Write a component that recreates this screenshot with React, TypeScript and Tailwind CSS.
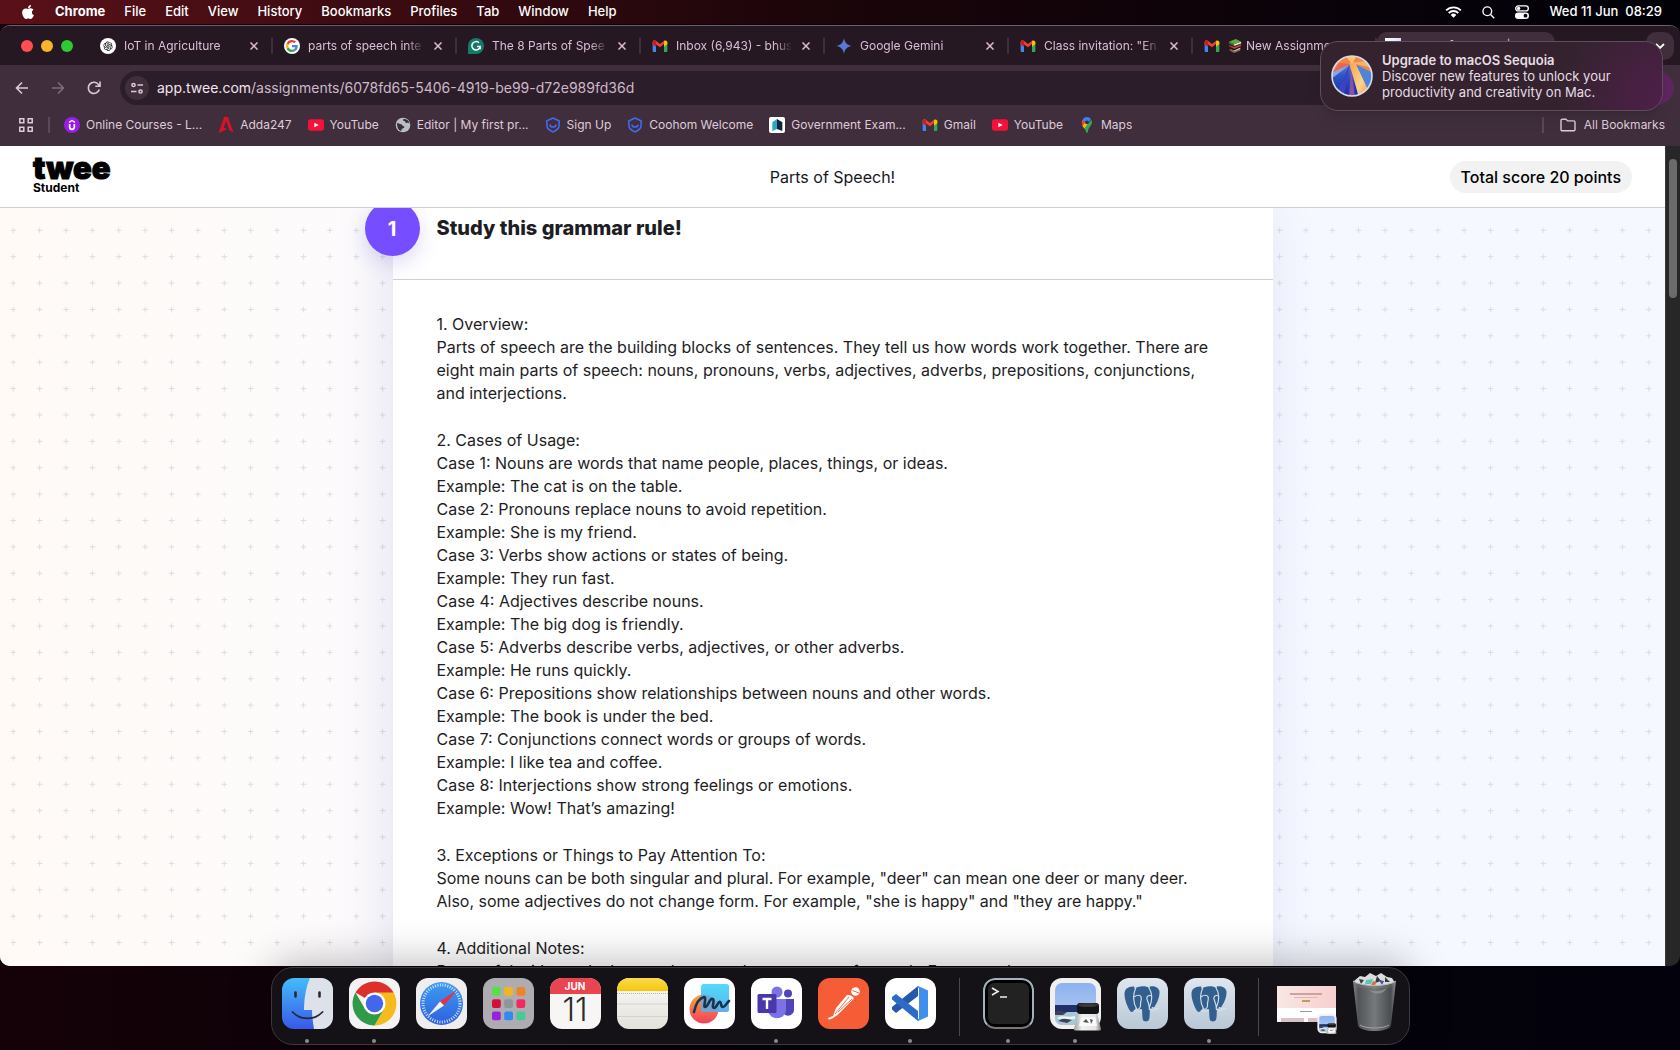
import React from "react";
import { FaApple } from "react-icons/fa";
import { AiOutlineOpenAI } from "react-icons/ai";

/* ---------- small brand icons ---------- */

const GmailIcon = () => (
  <svg viewBox="0 0 24 24" className="size-4 shrink-0" aria-hidden="true">
    <path d="M1 20V6l5 4v11H2.500C1.600 21 1 20.500 1 20Z" fill="#4285f4" />
    <path d="M23 20V6l-5 4v11h3.500c.9 0 1.500-.5 1.500-1Z" fill="#34a853" />
    <path d="M1 6.500C1 3.500 3.800 2.800 5.700 4.200L12 9l6.300-4.800 1.700 3L12 14 6 9.800v3.500L1 9.500Z" fill="#ea4335" />
    <path d="M18 9.500V4.400C20.200 2.800 23 3.900 23 6.500v2.800L18 13Z" fill="#fbbc04" />
    <path d="M6 9.800V4.400L1.600 4.100C1 5 1 5.700 1 6.500v2.800L6 13Z" fill="#c5221f" />
  </svg>
);

const GoogleIcon = () => (
  <svg viewBox="0 0 24 24" className="size-4 shrink-0" aria-hidden="true">
    <circle cx="12" cy="12" r="12" fill="#fff" />
    <path d="M20.600 12.200c0-.6-.1-1.200-.2-1.700H12v3.400h4.900a4.200 4.200 0 0 1-1.800 2.700l2.900 2.300c1.700-1.600 2.600-3.900 2.600-6.700Z" fill="#4285f4" />
    <path d="M12 21c2.400 0 4.500-.8 6-2.100l-2.900-2.300c-.8.5-1.800.9-3.100.9-2.400 0-4.400-1.600-5.100-3.800l-3 2.300A9 9 0 0 0 12 21Z" fill="#34a853" />
    <path d="M6.900 13.700a5.400 5.400 0 0 1 0-3.400l-3-2.300a9 9 0 0 0 0 8Z" fill="#fbbc05" />
    <path d="M12 6.500c1.400 0 2.600.5 3.500 1.400l2.600-2.600A9 9 0 0 0 3.900 8l3 2.300C7.600 8.100 9.600 6.500 12 6.500Z" fill="#ea4335" />
  </svg>
);

const ChatIcon = () => (
  <span className="flex size-4 shrink-0 items-center justify-center rounded-full bg-white text-[#222]">
    <AiOutlineOpenAI className="size-3" />
  </span>
);

const GrammarlyIcon = () => (
  <svg viewBox="0 0 24 24" className="size-4 shrink-0" aria-hidden="true">
    <path d="M0 24V12A12 12 0 1 1 12 24Z" fill="#15796a" />
    <path d="M16.500 7.200A6.300 6.300 0 1 0 18.300 12.800H13.500M18.300 12.800v4.200" fill="none" stroke="#fff" strokeWidth="2.200" />
  </svg>
);

const GeminiIcon = () => (
  <svg viewBox="0 0 24 24" className="size-4 shrink-0" aria-hidden="true">
    <defs>
      <linearGradient id="gem" x1="0" y1="1" x2="1" y2="0">
        <stop offset="0" stopColor="#2f86d8" />
        <stop offset=".5" stopColor="#5b78d8" />
        <stop offset="1" stopColor="#7d6ac8" />
      </linearGradient>
    </defs>
    <path d="M12 0c1 7 5 11 12 12-7 1-11 5-12 12-1-7-5-11-12-12C7 11 11 7 12 0Z" fill="url(#gem)" />
  </svg>
);

const BooksIcon = () => (
  <svg viewBox="0 0 16 16" className="size-3.5 shrink-0" aria-hidden="true">
    <path d="m1 3 8-3 6 3-8 3Z" fill="#5aa944" />
    <path d="m1 3 6 3v2L1 5Z" fill="#3c7d2c" />
    <path d="m7 6 8-3v2L7 8Z" fill="#e8e2d8" />
    <path d="m1 7 6 2 8-3v2l-8 3-6-3Z" fill="#c9463c" />
    <path d="m2 11 5 2 7-3v3l-7 3-5-3Z" fill="#8d6a52" />
    <path d="m7 13 7-3v1l-7 3Z" fill="#ded6cb" />
  </svg>
);

const UdemyIcon = () => (
  <svg viewBox="0 0 24 24" className="size-4 shrink-0" aria-hidden="true">
    <circle cx="12" cy="12" r="12" fill="#9a1bea" />
    <path d="m7.500 8 4.500-2.800L16.500 8" fill="none" stroke="#fff" strokeWidth="2" />
    <path d="M8.500 10.500v4.500a3.500 3.500 0 0 0 7 0v-4.500" fill="none" stroke="#fff" strokeWidth="2.600" />
  </svg>
);

const AddaIcon = () => (
  <svg viewBox="0 0 24 24" className="size-4 shrink-0" aria-hidden="true">
    <path d="M9 0h6l8 23-6-3-2-6-3-8-3.500 10L14 18 1 24Z" fill="#d9122b" />
  </svg>
);

const YouTubeIcon = () => (
  <svg viewBox="0 0 24 24" className="size-4 shrink-0" aria-hidden="true">
    <rect y="3.500" width="24" height="17" rx="4" fill="#f6103a" />
    <path d="m9.500 8.500 6.500 3.500-6.500 3.500Z" fill="#fff" />
  </svg>
);

const GlobeIcon = () => (
  <svg viewBox="0 0 24 24" className="size-4 shrink-0" aria-hidden="true">
    <circle cx="12" cy="12" r="11" fill="#b9bdc6" />
    <path d="M3 9c3 0 4 2 6 2s2 3 4 3 1 3-1 3-2 4-3 4C5 20 3 16 3 9ZM13 3c-2 1-1 3 1 3s1 3 3 3 3-1 5 1c-1-4-4-7-9-7Z" fill="#3d2d3a" />
  </svg>
);

const HexIcon = () => (
  <svg viewBox="0 0 24 24" className="size-4 shrink-0" aria-hidden="true">
    <path d="m12 1.500 9.500 4.500-.8 9.500C19.500 18.500 15.500 20.500 12 22.500 8.500 20.500 4.500 18.500 3.300 15.500L2.500 6Z" fill="none" stroke="#4068f0" strokeWidth="2.400" strokeLinejoin="round" />
    <path d="M7.500 12c1 4 8 4 9 0" fill="none" stroke="#4068f0" strokeWidth="2.400" strokeLinecap="round" />
  </svg>
);

const GovIcon = () => (
  <svg viewBox="0 0 24 24" className="size-4 shrink-0" aria-hidden="true">
    <rect width="24" height="24" rx="3" fill="#fff" />
    <path d="M12 3v15l-7 3V8Z" fill="#27a9c4" />
    <path d="M12 3v15l8 3V8Z" fill="#13253a" />
  </svg>
);

const MapsIcon = () => (
  <svg viewBox="0 0 24 24" className="size-4 shrink-0" aria-hidden="true">
    <path d="M12 0c2 0 4.500 1 6 3.200L9.500 13 4.500 6C5.500 2.500 8.500 0 12 0Z" fill="#3f7df0" />
    <path d="M4.800 4.500 9 8l-3.500 6C4 11 3.500 8 4.800 4.500Z" fill="#ea4335" />
    <path d="m9 8.500-3.800 5 3 4L15 9.500Z" fill="#fbbc04" />
    <path d="M18.500 4c3 6-2 9.500-4 13.500-1 2-1 6.500-2.500 6.500s-1.500-4-4-7Z" fill="#34a853" />
    <circle cx="12" cy="8" r="2.800" fill="#3d2d3a" />
  </svg>
);

const XIcon = () => (
  <svg viewBox="0 0 8 8" className="size-2" fill="none" stroke="currentColor" strokeWidth="1.500" aria-hidden="true">
    <path d="m.5.5 7 7M7.500.5l-7 7" />
  </svg>
);

/* ---------- menu bar ---------- */

const menus = ["File", "Edit", "View", "History", "Bookmarks", "Profiles", "Tab", "Window", "Help"];

function MenuBar() {
  return (
    <header className="flex h-6 shrink-0 items-center justify-between bg-linear-to-r from-[#5a1018] via-[#1a0509] to-[#020108] pr-[18px] pl-5 text-[13px] font-medium text-white">
      <nav className="flex items-center gap-[19px]">
        <button aria-label="Apple menu"><FaApple className="size-4" /></button>
        <button className="font-bold">Chrome</button>
        {menus.map((m) => <button key={m}>{m}</button>)}
      </nav>
      <div className="flex items-center gap-5">
        <svg viewBox="0 0 18 13" className="h-3 w-[17px]" aria-hidden="true">
          <path d="M1 4.800a11.300 11.300 0 0 1 16 0M3.800 7.600a7.400 7.400 0 0 1 10.400 0" fill="none" stroke="#fff" strokeWidth="2" />
          <path d="M6 9.700a4.300 4.300 0 0 1 6 0l-3 3Z" fill="#fff" />
        </svg>
        <svg viewBox="0 0 14 14" className="size-[13px]" fill="none" stroke="#fff" strokeWidth="1.500" aria-hidden="true">
          <circle cx="5.700" cy="5.700" r="4.700" /><path d="m9.200 9.200 4 4" />
        </svg>
        <svg viewBox="0 0 14 14" className="size-3.5" aria-hidden="true">
          <rect x=".7" y=".9" width="12.600" height="5" rx="2.500" fill="none" stroke="#fff" strokeWidth="1.300" />
          <circle cx="3.600" cy="3.400" r="1.700" fill="#fff" />
          <rect y="7.500" width="14" height="6.400" rx="3.200" fill="#fff" />
          <circle cx="10.500" cy="10.700" r="1.900" fill="#0a0408" />
        </svg>
        <time className="whitespace-pre">Wed 11 Jun  08:29</time>
      </div>
    </header>
  );
}

/* ---------- browser chrome ---------- */

type TabInfo = { title: string; icon: React.ReactNode; extra?: React.ReactNode };

const tabs: TabInfo[] = [
  { title: "IoT in Agriculture", icon: <ChatIcon /> },
  { title: "parts of speech inte", icon: <GoogleIcon /> },
  { title: "The 8 Parts of Spee", icon: <GrammarlyIcon /> },
  { title: "Inbox (6,943) - bhus", icon: <GmailIcon /> },
  { title: "Google Gemini", icon: <GeminiIcon /> },
  { title: "Class invitation: \"En", icon: <GmailIcon /> },
  { title: "New Assignme", icon: <GmailIcon />, extra: <BooksIcon /> },
];

function TabStrip() {
  return (
    <div className="flex h-[39px] shrink-0 items-center bg-[#261823] pr-1.5 pl-[21px] text-xs text-[#dcbdd6]">
      <div className="flex w-[68px] shrink-0 gap-2">
        <button aria-label="Close window" className="size-3 rounded-full bg-[#ff4f55]" />
        <button aria-label="Minimise window" className="size-3 rounded-full bg-[#f9b42a]" />
        <button aria-label="Zoom window" className="size-3 rounded-full bg-[#2fc933]" />
      </div>
      <div role="tablist" aria-label="Tabs" className="flex min-w-0">
        {tabs.map((t) => (
          <div key={t.title} className="flex h-4 w-[184px] items-center border-r-2 border-[#402e3c] pr-[11px] pl-[11px]">
            <button role="tab" aria-selected="false" className="flex min-w-0 flex-1 items-center gap-2">
              {t.icon}
              {t.extra && <span className="-mr-1">{t.extra}</span>}
              <span className="min-w-0 flex-1 overflow-hidden mask-r-from-85% mask-r-to-100% text-left whitespace-nowrap">{t.title}</span>
            </button>
            <button aria-label={`Close ${t.title}`} className="ml-2 p-0.5"><XIcon /></button>
          </div>
        ))}
        <button role="tab" aria-selected="true" className="-my-1.5 flex h-7 w-[178px] items-center gap-2 rounded-[10px] bg-[#402e3c] px-2">
          <span className="size-4 bg-linear-to-br from-white to-[#b9c9ee] text-[11px] leading-4 font-black text-black">t</span>
          <span>Parts of Speech! | Twee</span>
        </button>
      </div>
      <button aria-label="New tab" className="ml-3.5 text-lg">+</button>
      <button aria-label="Search tabs" className="ml-auto flex size-7 items-center justify-center rounded-[10px] bg-[#402e3c] text-white">
        <svg viewBox="0 0 10 6" className="h-1.5 w-2.5" fill="none" stroke="currentColor" strokeWidth="1.800" aria-hidden="true"><path d="m1 1 4 4 4-4" /></svg>
      </button>
    </div>
  );
}

function Toolbar() {
  return (
    <div className="flex h-[41px] shrink-0 items-center bg-[#402e3c] px-1.5 pt-[5px] text-[#e0c8da]">
      <div className="flex w-[114px] items-center gap-5 pl-2">
        <button aria-label="Back">
          <svg viewBox="0 0 16 16" className="size-4" fill="none" stroke="currentColor" strokeWidth="1.600" aria-hidden="true"><path d="M14 8H2.500M8 2.500 2.500 8 8 13.500" /></svg>
        </button>
        <button aria-label="Forward" className="text-[#806d7b]">
          <svg viewBox="0 0 16 16" className="size-4" fill="none" stroke="currentColor" strokeWidth="1.600" aria-hidden="true"><path d="M2 8h11.500M8 2.500 13.500 8 8 13.500" /></svg>
        </button>
        <button aria-label="Reload">
          <svg viewBox="0 0 16 16" className="size-4" fill="none" stroke="currentColor" strokeWidth="1.600" aria-hidden="true"><path d="M13.300 9.500A5.600 5.600 0 1 1 12.500 4.600L14 6.200M14 1.500v4.700H9.300" /></svg>
        </button>
      </div>
      <div className="flex h-[34px] min-w-0 flex-1 items-center gap-2 rounded-full bg-[#2c1d2a] pl-[5px]">
        <button aria-label="View site information" className="flex size-6 items-center justify-center rounded-full bg-[#402e3c]">
          <svg viewBox="0 0 14 14" className="size-3.5" fill="none" stroke="currentColor" strokeWidth="1.500" aria-hidden="true">
            <circle cx="3.500" cy="4" r="1.600" /><path d="M7.500 4H13M1 10.500h5.500" /><circle cx="10.500" cy="10.500" r="1.600" />
          </svg>
        </button>
        <button className="truncate text-left text-sm" aria-label="Address">
          <span className="text-[#f3e4ef]">app.twee.com</span><span className="text-[#cdb9c8]">/assignments/6078fd65-5406-4919-be99-d72e989fd36d</span>
        </button>
      </div>
      <button aria-label="Profile" className="ml-3 size-[34px] rounded-full bg-[#5e265f]" />
    </div>
  );
}

const bookmarks: [string, React.ReactNode][] = [
  ["Online Courses - L...", <UdemyIcon />],
  ["Adda247", <AddaIcon />],
  ["YouTube", <YouTubeIcon />],
  ["Editor | My first pr...", <GlobeIcon />],
  ["Sign Up", <HexIcon />],
  ["Coohom Welcome", <HexIcon />],
  ["Government Exam...", <GovIcon />],
  ["Gmail", <GmailIcon />],
  ["YouTube", <YouTubeIcon />],
  ["Maps", <MapsIcon />],
];

function BookmarksBar() {
  return (
    <div className="flex h-10 shrink-0 items-center bg-[#402e3c] pr-[15px] pb-0.5 pl-[19px] text-xs text-[#dfcbda]">
      <button aria-label="Apps">
        <svg viewBox="0 0 14 14" className="size-3.5" fill="none" stroke="currentColor" strokeWidth="1.500" aria-hidden="true">
          <path d="M.8.8h4v4h-4ZM9.200.8h4v4h-4ZM.8 9.200h4v4h-4ZM9.200 9.200h4v4h-4Z" />
        </svg>
      </button>
      <span className="mr-3.5 ml-[15px] h-4 w-0.5 bg-[#5c4857]" />
      <nav aria-label="Bookmarks" className="flex min-w-0 gap-4">
        {bookmarks.map(([label, icon], i) => (
          <a key={i} href="#" className="flex items-center gap-1.5 whitespace-nowrap">{icon}{label}</a>
        ))}
      </nav>
      <span className="mr-4 ml-auto h-4 w-0.5 bg-[#5c4857]" />
      <button className="flex items-center gap-2 whitespace-nowrap">
        <svg viewBox="0 0 16 14" className="h-3.5 w-4" fill="none" stroke="currentColor" strokeWidth="1.400" aria-hidden="true">
          <path d="M1 2.500C1 1.700 1.500 1.200 2.200 1.200H6l1.600 1.700h6.200c.7 0 1.200.5 1.200 1.200v7.500c0 .7-.5 1.200-1.200 1.200H2.200C1.500 12.800 1 12.300 1 11.600Z" />
        </svg>
        All Bookmarks
      </button>
    </div>
  );
}

/* ---------- page ---------- */

const sections: string[][] = [
  [
    "1. Overview:",
    "Parts of speech are the building blocks of sentences. They tell us how words work together. There are eight main parts of speech: nouns, pronouns, verbs, adjectives, adverbs, prepositions, conjunctions, and interjections.",
  ],
  [
    "2. Cases of Usage:",
    "Case 1: Nouns are words that name people, places, things, or ideas.",
    "Example: The cat is on the table.",
    "Case 2: Pronouns replace nouns to avoid repetition.",
    "Example: She is my friend.",
    "Case 3: Verbs show actions or states of being.",
    "Example: They run fast.",
    "Case 4: Adjectives describe nouns.",
    "Example: The big dog is friendly.",
    "Case 5: Adverbs describe verbs, adjectives, or other adverbs.",
    "Example: He runs quickly.",
    "Case 6: Prepositions show relationships between nouns and other words.",
    "Example: The book is under the bed.",
    "Case 7: Conjunctions connect words or groups of words.",
    "Example: I like tea and coffee.",
    "Case 8: Interjections show strong feelings or emotions.",
    "Example: Wow! That’s amazing!",
  ],
  [
    "3. Exceptions or Things to Pay Attention To:",
    "Some nouns can be both singular and plural. For example, \"deer\" can mean one deer or many deer.",
    "Also, some adjectives do not change form. For example, \"she is happy\" and \"they are happy.\"",
  ],
  ["4. Additional Notes:", "Be careful with words that can be more than one part of speech. For example, run."],
];

function PlusField() {
  return (
    <svg className="absolute inset-0 size-full" aria-hidden="true">
      <defs>
        <pattern id="plus" width="26.380" height="26.380" patternUnits="userSpaceOnUse" y="9.100">
          <path d="M10.500 13.300h5.600M13.300 10.500v5.600" stroke="#dcdce0" strokeWidth="1" />
        </pattern>
      </defs>
      <rect width="100%" height="100%" fill="url(#plus)" />
    </svg>
  );
}

function Page() {
  return (
    <div className="flex min-h-0 flex-1">
      <div className="flex min-w-0 flex-1 flex-col bg-white">
        <div className="z-10 grid h-[62px] shrink-0 grid-cols-[1fr_auto_1fr] items-center border-b border-[#cfcfd6] bg-white px-[33px] text-[#17171c]">
          <a href="#" aria-label="Twee Student" className="flex flex-col justify-self-start text-black">
            <span className="-mt-1.5 text-[31px] leading-7 font-black [-webkit-text-stroke:1px_black]">twee</span>
            <span className="text-xs leading-3 font-bold">Student</span>
          </a>
          <h1 className="text-base">Parts of Speech!</h1>
          <p className="justify-self-end rounded-full bg-[#f2f2f2] px-[11px] py-1 text-base font-medium text-black">Total score 20 points</p>
        </div>
        <div className="relative min-h-0 flex-1 overflow-hidden bg-linear-to-r from-[#fffaf6] via-[#fcfbfd] via-25% to-[#f5f8ff] to-75%">
          <PlusField />
          <main className="relative mx-auto w-[880px] max-w-full bg-white text-[#1d1d24] shadow-[-8px_0_50px_rgba(90,90,170,0.14)]">
            <div className="flex h-[72px] items-start border-b border-[#cfcfd6] px-11 pt-[5px]">
              <span className="absolute -top-[7px] -left-7 flex size-[55px] items-center justify-center rounded-full bg-[#764dff] text-xl font-bold text-white shadow-[0_8px_20px_rgba(90,80,200,0.2)]">1</span>
              <h2 className="text-xl leading-[30px] font-extrabold">Study this grammar rule!</h2>
            </div>
            <div className="flex flex-col gap-6 pt-[33px] pr-[50px] pl-11 text-base leading-[23px]">
              {sections.map((lines) => (
                <section key={lines[0]}>
                  {lines.map((l) => <p key={l}>{l}</p>)}
                </section>
              ))}
            </div>
          </main>
        </div>
      </div>
      <div className="w-[15px] shrink-0 border-l border-[#3a3a3a] bg-[#272727] p-[3px] pt-[13px]">
        <div className="h-[139px] w-2 rounded-full bg-[#6b6b6b]" />
      </div>
    </div>
  );
}

/* ---------- notification ---------- */

function Notification() {
  return (
    <aside className="absolute top-[41px] right-[17px] z-20 flex w-[343px] items-center gap-[9px] rounded-[18px] border border-[#5f4d59] bg-[#34232f] bg-[radial-gradient(circle_at_100%_85%,#4f1f49_0%,#34232f_30%)] py-2.5 pl-2.5 text-[13px] leading-4 text-[#e6dee4] shadow-lg">
      <svg viewBox="0 0 42 42" className="size-[42px] shrink-0" aria-hidden="true">
        <defs>
          <clipPath id="seq"><circle cx="21" cy="21" r="20" /></clipPath>
          <linearGradient id="seqBlue" x1="0" y1="0" x2="0" y2="1">
            <stop offset="0" stopColor="#7fa0dc" /><stop offset=".5" stopColor="#2b55c8" /><stop offset="1" stopColor="#1b2a9c" />
          </linearGradient>
          <linearGradient id="seqRay" x1="0" y1="0" x2="1" y2="1">
            <stop offset="0" stopColor="#f9a04a" /><stop offset=".6" stopColor="#fcd38c" /><stop offset="1" stopColor="#f0895a" />
          </linearGradient>
        </defs>
        <g clipPath="url(#seq)">
          <rect width="42" height="42" fill="url(#seqBlue)" />
          <path d="M22 8 0 17V0h42v26Z" fill="#f08748" />
          <path d="M22 8 42 18v24H27Z" fill="#4f83d8" />
          <path d="M20 8 42 5v8Z" fill="#f7b36b" />
          <path d="M20 9 2 18 8 8Z" fill="#e8664f" />
          <path d="M20 9 0 18v6Z" fill="#8fa3dc" />
          <path d="M19 8 5 40h8Z" fill="#3b43c4" />
          <path d="M20 12 18 42h6Z" fill="#8a4fa8" />
          <path d="m18 8 6-1 14 30-10 5Z" fill="url(#seqRay)" />
          <path d="m14 0 7 9 5-9Z" fill="#ffc774" />
        </g>
        <circle cx="21" cy="21" r="20" fill="none" stroke="#d9dbe6" strokeWidth="1.600" />
      </svg>
      <div>
        <p className="font-semibold">Upgrade to macOS Sequoia</p>
        <p>Discover new features to unlock your<br />productivity and creativity on Mac.</p>
      </div>
    </aside>
  );
}

/* ---------- dock ---------- */

const Finder = () => (
  <svg viewBox="0 0 51 51" className="size-full">
    <defs><linearGradient id="fin" x1="0" y1="0" x2="0" y2="1"><stop stopColor="#43bdf8" /><stop offset="1" stopColor="#3a58ea" /></linearGradient></defs>
    <rect width="51" height="51" fill="url(#fin)" />
    <path d="M28 0h23v51H32c-1-6-2-13-2-19h-8C22 20 24 9 28 0Z" fill="#dde1ea" />
    <path d="M10.500 34c8 8.500 22 8.500 30 0" fill="none" stroke="#252a36" strokeWidth="1.800" strokeLinecap="round" />
    <path d="M13.500 14.500v4M37.500 14.500v4" stroke="#252a36" strokeWidth="2.600" strokeLinecap="round" />
  </svg>
);

const Chrome = () => (
  <svg viewBox="0 0 51 51" className="size-full">
    <rect width="51" height="51" fill="#f3f3f3" />
    <path d="M25.500 25.500 6.500 14.500A22 22 0 0 1 44.600 14.500Z" fill="#dd2f2c" />
    <path d="M25.500 14.500h19A22 22 0 0 1 25.500 47.500L35 31Z" fill="#f5bb1d" />
    <path d="M6.500 14.500A22 22 0 0 0 25.500 47.500L35 31 16 31Z" fill="#2f9a47" />
    <circle cx="25.500" cy="25.500" r="11" fill="#fff" />
    <circle cx="25.500" cy="25.500" r="8.700" fill="#4267ee" />
  </svg>
);

const Safari = () => (
  <svg viewBox="0 0 51 51" className="size-full">
    <defs><linearGradient id="saf" x1="0" y1="0" x2="0" y2="1"><stop stopColor="#3d9df2" /><stop offset="1" stopColor="#2e5fe0" /></linearGradient></defs>
    <rect width="51" height="51" fill="#eeeeef" />
    <circle cx="25.500" cy="25.500" r="21.500" fill="url(#saf)" />
    <circle cx="25.500" cy="25.500" r="18.500" fill="none" stroke="#cfe2fb" strokeWidth="3" strokeDasharray="1 1.500" />
    <path d="m41 12-13 15.500-4-4Z" fill="#e8313b" />
    <path d="M11.500 38.500 24 23.500l4 4Z" fill="#f2f2f2" />
  </svg>
);

const padColors = ["#54e04a", "#f4b41d", "#ef8422", "#d60c3b", "#8b979c", "#f4285f", "#9a22dd", "#2f8bf2", "#48c997"];
const Launchpad = () => (
  <svg viewBox="0 0 51 51" className="size-full">
    <rect width="51" height="51" fill="#adadb1" />
    {padColors.map((c, i) => (
      <rect key={c} x={9 + (i % 3) * 12.2} y={9 + Math.floor(i / 3) * 12.2} width="8.800" height="8.800" rx="2" fill={c} />
    ))}
  </svg>
);

const Calendar = () => (
  <div className="flex size-full flex-col items-center bg-[#f7f6f4]">
    <span className="w-full bg-[#ea4450] text-center text-[10px] leading-4 font-bold text-white">JUN</span>
    <span className="text-[32px] leading-8 font-light text-[#2b2b2b]">11</span>
  </div>
);

const Notes = () => (
  <svg viewBox="0 0 51 51" className="size-full">
    <defs>
      <linearGradient id="notesY" x1="0" y1="0" x2="0" y2="1"><stop stopColor="#fbdc4b" /><stop offset="1" stopColor="#f7c50c" /></linearGradient>
      <linearGradient id="notesW" x1="0" y1="0" x2="0" y2="1"><stop stopColor="#fbfaf8" /><stop offset="1" stopColor="#e4e1da" /></linearGradient>
    </defs>
    <rect width="51" height="51" fill="url(#notesW)" />
    <rect width="51" height="13" fill="url(#notesY)" />
    <path d="M0 15.500h51" stroke="#b9b5ac" strokeWidth="1" strokeDasharray="1 1" />
    <path d="M0 26h51M0 38.500h51" stroke="#d3d3d6" />
  </svg>
);

const Freeform = () => (
  <svg viewBox="0 0 51 51" className="size-full">
    <defs>
      <linearGradient id="ffo" x1="0" y1="0" x2="0" y2="1"><stop stopColor="#f7a53a" /><stop offset="1" stopColor="#f0405e" /></linearGradient>
      <linearGradient id="ffb" x1="0" y1="0" x2="0" y2="1"><stop stopColor="#45d8fa" /><stop offset="1" stopColor="#52a9ea" /></linearGradient>
    </defs>
    <rect width="51" height="51" fill="#fff" />
    <circle cx="20" cy="31" r="14.500" fill="url(#ffo)" />
    <rect x="17" y="6" width="28" height="28" rx="2.500" fill="url(#ffb)" opacity=".93" />
    <path d="M17 34V17a14.500 14.500 0 0 1 17 17Z" fill="#7d9fd0" opacity=".7" />
    <path d="M10 34c2-9 6-14 10-15 3 0-1 10 1 10 3 0 5-10 8-8 2 2-2 9 1 9 3 0 4-7 6-6s0 5 3 5c2 0 3-3 6-6" fill="none" stroke="#17344f" strokeWidth="2.600" strokeLinecap="round" />
  </svg>
);

const Teams = () => (
  <svg viewBox="0 0 51 51" className="size-full">
    <rect width="51" height="51" fill="#fff" />
    <circle cx="37" cy="15.500" r="4" fill="#4f44b8" />
    <circle cx="26" cy="14" r="5.500" fill="#7b72e6" />
    <path d="M31 21h12v10a6 6 0 0 1-10 5Z" fill="#4f44b8" />
    <path d="M17 21h18v12a9.200 9.200 0 0 1-18 0Z" fill="#7b72e6" />
    <rect x="6.500" y="16" width="19" height="19" rx="1.500" fill="#4938ac" />
    <path d="M11.500 21h9M16 21v10" stroke="#fff" strokeWidth="2.400" />
  </svg>
);

const Postman = () => (
  <svg viewBox="0 0 51 51" className="size-full">
    <rect width="51" height="51" fill="#f65d37" />
    <circle cx="37.500" cy="13.500" r="4.300" fill="#fff" />
    <path d="M34.500 12.500 41 15" stroke="#f65d37" strokeWidth="1" />
    <path d="M29 17c3-.5 6 1 7 3.500L19.500 37l-6 4-3 .5-.5-1.500 5-2L18 30Z" fill="#fff" />
    <path d="M31 19 17 36M34 21 20 34" stroke="#f65d37" strokeWidth=".9" />
  </svg>
);

const VsCode = () => (
  <svg viewBox="0 0 51 51" className="size-full">
    <rect width="51" height="51" fill="#fff" />
    <path d="M33 8v10L11 35l-4-3.500v-2.500Z" fill="#2559a8" />
    <path d="M33 43V33L11 16l-4 3v2.500Z" fill="#2d6cc6" />
    <path d="m33 8 10 4.500v26L33 43l-2-1.500c2 .5 3-.5 3-2V11.500c0-1.500-1-2.500-3-2Z" fill="#3f8ef0" />
  </svg>
);

const Terminal = () => (
  <div className="size-full rounded-[12px] border-2 border-[#9fb3bd] border-b-[#777] bg-black p-[3px]">
    <svg viewBox="0 0 41 41" className="size-full">
      <rect width="41" height="41" rx="6" fill="#222" />
      <path d="m4 5 6 3.500L4 12M12 14h7" fill="none" stroke="#eee" strokeWidth="1.600" />
    </svg>
  </div>
);

const Beach = ({ className }: { className: string }) => (
  <svg viewBox="0 0 51 53" className={className} aria-hidden="true">
    <defs>
      <linearGradient id="sky" x1="0" y1="0" x2="0" y2="1"><stop stopColor="#8db2ee" /><stop offset="1" stopColor="#b9cdf2" /></linearGradient>
      <linearGradient id="glass" x1="0" y1="0" x2="1" y2="0"><stop stopColor="#9c9c9c" /><stop offset=".3" stopColor="#f1f1f1" /><stop offset=".8" stopColor="#e3e3e3" /><stop offset="1" stopColor="#7c7c7c" /></linearGradient>
    </defs>
    <rect width="51" height="51" rx="12" fill="#f1eff0" />
    <rect x="5" y="5" width="41" height="42" rx="7" fill="url(#sky)" />
    <path d="M5 27h41v9H5Z" fill="#232f6b" />
    <path d="M5 34h41v6a7 7 0 0 1-7 7H12a7 7 0 0 1-7-7Z" fill="#a9c8d6" />
    <path d="M5 34c4-3 8 0 12 0l-4 3H5ZM8 43l6-3 8 2-5 3Z" fill="#3d4258" />
    <path d="M8 39c6-2 10 1 17-1v3c-6 1-10-1-17 0Z" fill="#eef5f8" />
    <path d="M29 35h18l4 16c0 1-1 1.500-2 1.500H26c-1.500 0-2.500-.5-2-2Z" fill="url(#glass)" />
    <path d="m31 40 14-1 2 9H29Z" fill="#fafafa" />
    <path d="m33 44 3-3 3 4ZM40 41l3 1-2 4Z" fill="#555" />
    <rect x="27" y="25" width="22" height="11" rx="3" fill="#141416" />
    <ellipse cx="38" cy="27" rx="10" ry="2" fill="#3a3a3d" />
  </svg>
);

const Postgres = () => (
  <div className="flex size-full items-center justify-center bg-linear-to-b from-[#dfe6ef] to-[#b9c8d6]">
    <svg viewBox="0 0 36 37" className="size-9" aria-hidden="true">
      <path d="M10 .5C4 0 0 3 0 8c0 6 3 14 6 18 1.500 1.500 3 .5 5-2l1-2Z" fill="#335f8f" />
      <path d="M26 .5c6-1 10 2 10 6 0 6-3 12-6 16l-5 1Z" fill="#335f8f" />
      <path d="M10 3C14-.5 22-.5 26 2c3 3 3 12 1 20l-1 3c0 4 0 8-1 10-1 2-5 2-6 0-1-3-.5-7-1-11l-5 0c-5-4-5-16-3-21Z" fill="#335f8f" />
      <path d="M11.500 2.500c-3 5-3 14 1 21 2 1.500 3.500-1 4-3M10 11c3-2 6-2 7 0 1 3-1 6-.5 9M25 1.500c4 6 3.500 14 .5 21M27 10c-3-1-4 1-4 3l2 6c.5 2 .5 3 .5 5M10 25c2 2 5 1.500 7-.5M26 24c3 1.500 7 1 9.500-1-3 .5-5 .3-7-1" fill="none" stroke="#d5deE8" strokeWidth="1.200" strokeLinecap="round" />
    </svg>
  </div>
);

const Trash = () => (
  <svg viewBox="0 0 45 59" className="h-[59px] w-[45px]" aria-hidden="true">
    <defs>
      <linearGradient id="bin" x1="0" y1="0" x2="1" y2="0">
        <stop stopColor="#8b8e90" /><stop offset=".12" stopColor="#55595b" /><stop offset=".5" stopColor="#7d8082" /><stop offset=".88" stopColor="#4d5052" /><stop offset="1" stopColor="#94979a" />
      </linearGradient>
    </defs>
    <path d="m2 8 6-5 5 1 5-4 6 3 5-3 6 4 5 1 3 5-5 5H6Z" fill="#dcdcdc" />
    <path d="m7 6 5 1-3 4ZM25 3l4 5-6 2ZM33 4l5 5h-5Z" fill="#35383c" />
    <path d="m14 7 7-1-2 5h-6Z" fill="#52c8bd" />
    <path d="m21 8 4 1-2 3h-4Z" fill="#d8743b" />
    <path d="m27 7 5 1-2 4Z" fill="#3e50a8" />
    <path d="M1 8c8 6 35 6 43 0l-5 44c-1 8-32 8-33 0Z" fill="url(#bin)" opacity=".94" />
    <path d="M1 8c8 6 35 6 43 0" fill="none" stroke="#b9bcbe" strokeWidth="1" />
    <path d="M8 52c6 4 23 4 29 0" fill="none" stroke="#a1a4a6" strokeWidth="1" />
    <path d="M17 17c7 3 13 0 18-2-3 6-10 8-18 2Z" fill="#a9acae" opacity=".5" />
  </svg>
);

const Thumbnail = () => (
  <span className="relative block h-9 w-[59px]">
    <span className="flex h-9 flex-col items-center overflow-hidden bg-white">
      <span className="flex h-[22px] w-full flex-col items-center justify-center gap-0.5 bg-linear-to-r from-[#f8e7e4] to-[#f7cfcf]">
        <span className="h-0.5 w-8 bg-[#cda29a]" />
        <span className="h-px w-6 bg-[#d8b9b6]" />
        <span className="h-0.5 w-2 bg-[#c8985c]" />
      </span>
      <span className="mt-[3px] h-px w-3 bg-[#9a9a9a]" />
      <span className="mt-auto flex h-1 w-full gap-1 px-1"><i className="flex-1 bg-[#d9c3c6]" /><i className="flex-1 bg-[#d9c3c6]" /></span>
    </span>
    <Beach className="absolute -right-px -bottom-3 size-5" />
  </span>
);

type App = { name: string; art: React.ReactNode; open?: boolean; free?: boolean };

const pinned: App[] = [
  { name: "Finder", art: <Finder />, open: true },
  { name: "Google Chrome", art: <Chrome />, open: true },
  { name: "Safari", art: <Safari /> },
  { name: "Launchpad", art: <Launchpad /> },
  { name: "Calendar", art: <Calendar /> },
  { name: "Notes", art: <Notes /> },
  { name: "Freeform", art: <Freeform /> },
  { name: "Microsoft Teams", art: <Teams />, open: true },
  { name: "Postman", art: <Postman /> },
  { name: "Visual Studio Code", art: <VsCode />, open: true },
];
const running: App[] = [
  { name: "Terminal", art: <Terminal />, open: true },
  { name: "Preview", art: <Beach className="h-[53px] w-[51px]" />, open: true, free: true },
  { name: "pgAdmin", art: <Postgres /> },
  { name: "PostgreSQL", art: <Postgres />, open: true },
];

function DockItem({ name, art, open, free }: App) {
  return (
    <button aria-label={name} className="flex flex-col items-center">
      <span className={free ? "size-[51px]" : "size-[51px] overflow-hidden rounded-[12px]"}>{art}</span>
      {open && <span className="mt-2.5 size-1 rounded-full bg-[#8d8a90]" />}
    </button>
  );
}

function Dock() {
  return (
    <footer className="relative mx-auto mt-px mb-[5px] flex h-[78px] w-fit shrink-0 items-start gap-4 rounded-[22px] border border-[#3b393f] bg-[#141217] pt-2.5 pr-2 pl-2.5 shadow-[0_-4px_40px_2px_rgba(0,0,0,0.25)]">
      {pinned.map((a) => <DockItem key={a.name} {...a} />)}
      <span className="mx-[7px] h-[58px] w-px bg-[#4b494f]" />
      {running.map((a) => <DockItem key={a.name} {...a} />)}
      <span className="mx-[7px] h-[58px] w-px bg-[#4b494f]" />
      <button aria-label="Minimised window" className="-ml-[5px] pt-2"><Thumbnail /></button>
      <button aria-label="Bin" className="-mt-[5px] mr-1"><Trash /></button>
    </footer>
  );
}

export default function App() {
  return (
    <div className="relative flex h-screen flex-col overflow-hidden bg-linear-to-r from-[#150208] via-[#050209] to-[#03020c] font-[Inter,sans-serif]">
      <MenuBar />
      <div className="mt-px flex min-h-0 flex-1 flex-col overflow-hidden rounded-[10px] border-t border-[#6b5c68]">
        <TabStrip />
        <Toolbar />
        <BookmarksBar />
        <Page />
      </div>
      <Notification />
      <Dock />
    </div>
  );
}
